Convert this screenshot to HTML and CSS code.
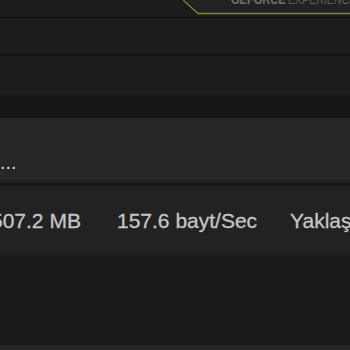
FILE: index.html
```html
<!DOCTYPE html>
<html>
<head>
<meta charset="utf-8">
<link rel="stylesheet" href="styles.css">
</head>
<body>
<div class="app">
  <header class="topbar">
    <div class="spacer"></div>
    <div class="brand">
      <svg class="brand-line" width="167" height="17" viewBox="0 0 167 17">
        <polygon points="0,0 167,0 167,13 15,13" fill="#222222"/>
        <polyline points="0,0 15,13.5 167,13.5" fill="none" stroke="#6f8f2a" stroke-width="1.3"/>
      </svg>
      <span class="brand-text"><b>GEFORCE</b><span class="exp">EXPERIENCE</span></span>
    </div>
  </header>
  <div class="sep-dark"></div>
  <div class="sep-light"></div>
  <section class="toolbar"></section>
  <div class="sep-dark2"></div>
  <section class="band-a"></section>
  <section class="band-b"></section>
  <section class="title-row"><span class="ellipsis">...</span></section>
  <div class="row-sep"></div>
  <section class="data-row">
    <span class="cell c1">507.2 MB</span>
    <span class="cell c2">157.6 bayt/Sec</span>
    <span class="cell c3">Yaklaşık</span>
  </section>
  <section class="empty"></section>
  <div class="bottom"></div>
</div>
</body>
</html>
```
FILE: styles.css
```css
html, body {
  margin: 0;
  padding: 0;
  background: #1b1b1b;
  overflow: hidden;
}
.app {
  width: 350px;
  height: 350px;
  display: flex;
  flex-direction: column;
  font-family: "Liberation Sans", Arial, sans-serif;
  overflow: hidden;
}
.topbar {
  height: 17px;
  flex: 0 0 17px;
  display: flex;
  background: #1c1c1c;
}
.spacer { flex: 1; }
.brand {
  flex: 0 0 167px;
  position: relative;
  overflow: hidden;
}
.brand-line {
  position: absolute;
  left: 0;
  top: 0;
  display: block;
}
.brand-text {
  position: absolute;
  left: 48px;
  top: -6px;
  font-size: 12px;
  line-height: 13px;
  color: #666666;
  white-space: nowrap;
  display: flex;
  gap: 3px;
}
.brand-text b {
  font-weight: 700;
  color: #717171;
  display: inline-block;
  transform: scaleX(0.92);
  transform-origin: left center;
  margin-right: -5px;
}
.exp {
  display: inline-block;
  transform: scaleX(0.88);
  transform-origin: left center;
  color: #5f5f5f;
}
.sep-dark { height: 2px; flex: 0 0 2px; background: #121212; }
.sep-light { height: 1px; flex: 0 0 1px; background: #262626; }
.toolbar { flex: 0 0 34px; background: #1c1c1c; }
.sep-dark2 { flex: 0 0 2px; background: #131313; }
.band-a { flex: 0 0 39px; background: #1c1c1c; }
.band-b { flex: 0 0 23px; background: #161616; }
.title-row {
  flex: 0 0 62px;
  background: #272727;
  display: flex;
  align-items: flex-end;
  box-sizing: border-box;
  padding-bottom: 8px;
}
.ellipsis {
  font-size: 20px;
  line-height: 20px;
  color: #d8d8d8;
}
.row-sep {
  flex: 0 0 6px;
  background: linear-gradient(#202020 0 3px, #161616 3px);
}
.data-row {
  flex: 0 0 69px;
  background: #222222;
  display: flex;
  align-items: center;
  white-space: nowrap;
}
.cell {
  font-size: 21px;
  color: #c6c6c6;
  flex: 0 0 auto;
  -webkit-text-stroke: 0.3px #c6c6c6;
}
.c1 { margin-left: -9px; width: 126px; }
.c2 { width: 173px; }
.empty { flex: 0 0 90px; background: #1b1b1b; }
.bottom { flex: 1; background: #262626; }
```
